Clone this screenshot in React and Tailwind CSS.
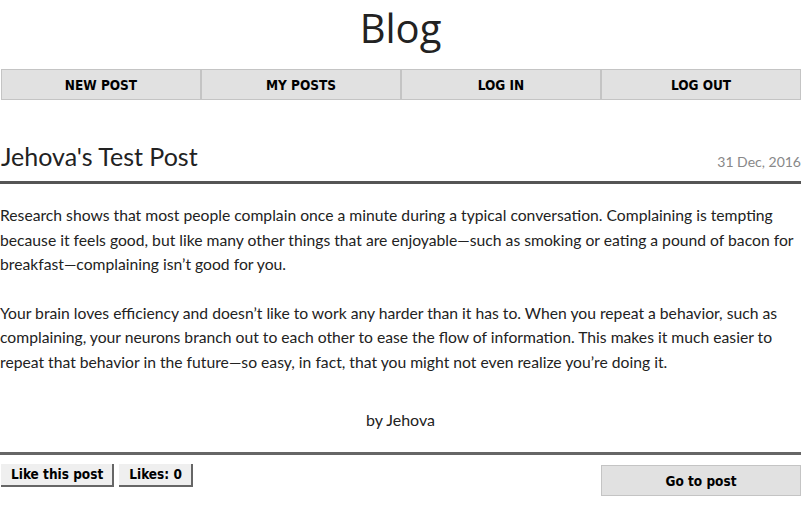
const navItems = ["NEW POST", "MY POSTS", "LOG IN", "LOG OUT"];

const btnFont = "font-['DejaVu_Sans_Condensed','DejaVu_Sans',sans-serif] font-stretch-condensed";

const App = () => {
  return (
    <div className="w-[801px] bg-white text-[#222]">
      <h1 className="text-center text-[40px] leading-[52px] pt-[2px] text-[#222] font-['Open_Sans',sans-serif]">
        Blog
      </h1>

      <nav className="mt-[15px] flex pl-px">
        {navItems.map((item) => (
          <button
            key={item}
            className={`w-[200px] h-[31px] bg-[#e1e1e1] border border-[#c4c4c4] text-[13.5px] font-bold text-black pt-[1px] ${btnFont}`}
          >
            {item}
          </button>
        ))}
      </nav>

      <div className="mt-[40px] font-['Lato',sans-serif]">
        <div className="flex items-end justify-between">
          <h2 className="text-[25px] leading-[32px] text-[#222] pl-[1px]">Jehova's Test Post</h2>
          <span className="text-[14px] text-[#888]">31 Dec, 2016</span>
        </div>
        <div className="mt-[9px] h-[3px] bg-[#555]" />

        <div className="mt-[19px] text-[15.7px] leading-[24.5px] text-[#222] space-y-[24px]">
          <p>
            Research shows that most people complain once a minute during a typical conversation. Complaining is
            tempting because it feels good, but like many other things that are enjoyable—such as smoking or eating a
            pound of bacon for breakfast—complaining isn’t good for you.
          </p>
          <p>
            Your brain loves efficiency and doesn’t like to work any harder than it has to. When you repeat a behavior,
            such as complaining, your neurons branch out to each other to ease the flow of information. This makes it
            much easier to repeat that behavior in the future—so easy, in fact, that you might not even realize you’re
            doing it.
          </p>
        </div>

        <p className="mt-[34px] text-center text-[16px] leading-[24px]">by Jehova</p>

        <div className="mt-[20px] h-[3px] bg-[#666]" />

        <div className="mt-[9px] flex items-start justify-between">
          <div className="flex gap-[5px] pl-[1px]">
            <button className={`h-[23px] pl-[10px] pr-[9px] bg-[#efefef] border-r-2 border-b-2 border-[#666] text-[13.5px] font-bold text-black ${btnFont}`}>
              Like this post
            </button>
            <button className={`h-[23px] pl-[10px] pr-[9px] bg-[#efefef] border-r-2 border-b-2 border-[#666] text-[13.5px] font-bold text-black ${btnFont}`}>
              Likes: 0
            </button>
          </div>
          <button
            className={`w-[200px] h-[31px] mt-px bg-[#e1e1e1] border border-[#c4c4c4] text-[13.5px] font-bold text-black pt-[1px] ${btnFont}`}
          >
            Go to post
          </button>
        </div>
      </div>
    </div>
  );
};

export default App;
